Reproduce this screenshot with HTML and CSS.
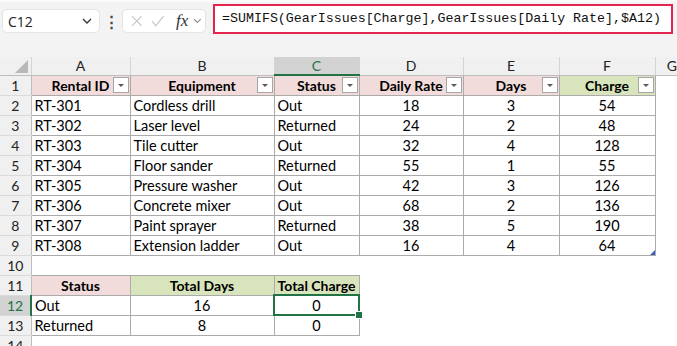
FILE: index.html
```html
<!DOCTYPE html>
<html lang="en">
<head>
  <meta charset="UTF-8" />
  <title>GearIssues</title>
  <link rel="stylesheet" href="styles.css">
</head>
<body>
  <div class="topbar">
    <div class="namebox">
      <span>C12</span>
      <svg class="chev" width="10" height="6" viewBox="0 0 10 6"><path d="M1 1l4 4 4-4" fill="none" stroke="#333" stroke-width="1.3"/></svg>
    </div>
    <div class="dots">&#8942;</div>
    <div class="fxbox">
      <svg width="12" height="12" viewBox="0 0 12 12"><path d="M1 1l10 10M11 1L1 11" stroke="#c4c4c4" stroke-width="1.2" fill="none"/></svg>
      <svg width="14" height="12" viewBox="0 0 14 12"><path d="M1 6l4 5 8-10" stroke="#c4c4c4" stroke-width="1.2" fill="none"/></svg>
      <span class="fx">fx</span>
      <svg width="9" height="6" viewBox="0 0 9 6"><path d="M1 1l3.5 3.5L8 1" fill="none" stroke="#888" stroke-width="1.1"/></svg>
    </div>
    <div class="formula">=SUMIFS(GearIssues[Charge],GearIssues[Daily Rate],$A12)</div>
  </div>

  <table class="sheet">
    <colgroup>
      <col class="w-rh"><col class="w-a"><col class="w-b"><col class="w-c"><col class="w-d"><col class="w-e"><col class="w-f"><col class="w-g">
    </colgroup>
    <thead>
      <tr class="colhead">
        <th class="corner"><span class="tri"></span></th>
        <th>A</th><th>B</th><th class="sel">C</th><th>D</th><th>E</th><th>F</th><th class="g">G</th>
      </tr>
    </thead>
    <tbody id="rows">
      <tr>
        <th class="rh">1</th>
        <td class="hd pink">Rental ID<span class="filter"></span></td>
        <td class="hd pink">Equipment<span class="filter"></span></td>
        <td class="hd pink">Status<span class="filter"></span></td>
        <td class="hd pink">Daily Rate<span class="filter"></span></td>
        <td class="hd pink">Days<span class="filter"></span></td>
        <td class="hd green">Charge<span class="filter"></span></td>
        <td class="empty"></td>
      </tr>
    </tbody>
    <tbody>
      <tr>
        <th class="rh">10</th>
        <td class="empty"></td><td class="empty"></td><td class="empty"></td><td class="empty"></td><td class="empty"></td><td class="empty"></td><td class="empty"></td>
      </tr>
      <tr>
        <th class="rh">11</th>
        <td class="hd pink">Status</td>
        <td class="hd green">Total Days</td>
        <td class="hd green tight">Total Charge</td>
        <td class="empty"></td><td class="empty"></td><td class="empty"></td><td class="empty"></td>
      </tr>
      <tr>
        <th class="rh selrow">12</th>
        <td class="cell">Out</td>
        <td class="cell num">16</td>
        <td class="cell num active">0<span class="handle"></span></td>
        <td class="empty"></td><td class="empty"></td><td class="empty"></td><td class="empty"></td>
      </tr>
      <tr>
        <th class="rh">13</th>
        <td class="cell">Returned</td>
        <td class="cell num">8</td>
        <td class="cell num">0</td>
        <td class="empty"></td><td class="empty"></td><td class="empty"></td><td class="empty"></td>
      </tr>
      <tr>
        <th class="rh">14</th>
        <td class="empty"></td><td class="empty"></td><td class="empty"></td><td class="empty"></td><td class="empty"></td><td class="empty"></td><td class="empty"></td>
      </tr>
    </tbody>
  </table>

  <script>
  // rental rows of the GearIssues table
  const gear = [
    ["RT-301", "Cordless drill", "Out", 18, 3],
    ["RT-302", "Laser level", "Returned", 24, 2],
    ["RT-303", "Tile cutter", "Out", 32, 4],
    ["RT-304", "Floor sander", "Returned", 55, 1],
    ["RT-305", "Pressure washer", "Out", 42, 3],
    ["RT-306", "Concrete mixer", "Out", 68, 2],
    ["RT-307", "Paint sprayer", "Returned", 38, 5],
    ["RT-308", "Extension ladder", "Out", 16, 4]
  ];

  const body = document.getElementById("rows");
  gear.forEach((g, i) => {
    const tr = document.createElement("tr");
    const last = i === gear.length - 1;
    tr.innerHTML =
      `<th class="rh">${i + 2}</th>` +
      `<td class="cell">${g[0]}</td>` +
      `<td class="cell">${g[1]}</td>` +
      `<td class="cell">${g[2]}</td>` +
      `<td class="cell num">${g[3]}</td>` +
      `<td class="cell num">${g[4]}</td>` +
      `<td class="cell num">${g[3] * g[4]}${last ? '<span class="corner-mark"></span>' : ''}</td>` +
      `<td class="empty"></td>`;
    body.appendChild(tr);
  });
  </script>
</body>
</html>
```

FILE: styles.css
```css
* {
  box-sizing: border-box;
}

body {
  margin: 0;
  width: 677px;
  height: 346px;
  overflow: hidden;
  background: white;
  font-family: Lato, "Liberation Sans", sans-serif;
  color: #000;
}

.topbar {
  height: 57px;
  background: #f3f3f3;
  border-top: 2px solid #fafafa;
  display: flex;
  align-items: flex-start;
  padding: 2px 0 0 2px;
}

.namebox {
  margin-top: 5px;
  width: 98px;
  height: 24px;
  background: white;
  border-radius: 5px;
  border: 1px solid #e4e4e4;
  display: flex;
  align-items: center;
  justify-content: space-between;
  padding: 0 7px 0 5px;
  font-family: "Open Sans", sans-serif;
  font-size: 14px;
  color: #222;
}

.dots {
  width: 22px;
  margin-top: 8px;
  text-align: center;
  font-size: 15px;
  font-weight: bold;
  color: #444;
}

.fxbox {
  margin-top: 5px;
  width: 84px;
  height: 24px;
  background: white;
  border-radius: 5px;
  border: 1px solid #e4e4e4;
  display: flex;
  align-items: center;
  gap: 8px;
  padding: 0 3px 0 8px;
}

.fx {
  font-family: "Liberation Serif", serif;
  font-style: italic;
  font-size: 17px;
  color: #333;
  margin-left: 4px;
  margin-right: -3px;
}

.formula {
  margin-left: 7px;
  width: 460px;
  height: 30px;
  background: white;
  border: 2px solid #e3244f;
  font-family: "Liberation Mono", monospace;
  font-size: 13.3px;
  line-height: 26px;
  padding-left: 7px;
  white-space: nowrap;
  color: #111;
}

.sheet {
  border-collapse: collapse;
  table-layout: fixed;
  width: 677px;
  font-size: 14.5px;
}

.w-rh { width: 31px; }
.w-a { width: 99px; }
.w-b { width: 144px; }
.w-c { width: 85px; }
.w-d { width: 104px; }
.w-e { width: 96px; }
.w-f { width: 96px; }
.w-g { width: 22px; }

tr {
  height: 20px;
}

tr.colhead {
  height: 18px;
}

.colhead th {
  height: 18px;
  padding: 0;
  background: #f0f0f0;
  border-right: 1px solid #d4d4d4;
  border-bottom: 1px solid #bdbdbd;
  font-weight: normal;
  font-size: 14px;
  color: #222;
  text-align: center;
}

.colhead th.sel {
  background: #d2d2d2;
  color: #217346;
  border-bottom: 2px solid #217346;
}

.colhead th.g {
  text-align: right;
  border-right: none;
  overflow: hidden;
}

.corner {
  position: relative;
}

.tri {
  position: absolute;
  right: 3px;
  bottom: 2px;
  width: 0;
  height: 0;
  border-left: 13px solid transparent;
  border-bottom: 13px solid #b8b8b8;
}

.rh {
  padding: 0;
  background: #f0f0f0;
  border-right: 1px solid #bdbdbd;
  border-bottom: 1px solid #dadada;
  font-weight: normal;
  font-size: 14px;
  color: #222;
  text-align: center;
}

.rh.selrow {
  background: #d2d2d2;
  color: #217346;
  border-right: 2px solid #217346;
}

.cell,
.hd {
  border: 1px solid #ababab;
  padding: 0 3px;
  white-space: nowrap;
  overflow: hidden;
  position: relative;
}

.num {
  text-align: center;
}

.hd {
  font-weight: bold;
  font-size: 14px;
  text-align: center;
}

.hd.tight {
  padding: 0;
  overflow: visible;
}

.pink {
  background: #f2dcdb;
}

.green {
  background: #d8e4bc;
}

.empty {
  padding: 0;
}

.filter {
  position: absolute;
  right: 1px;
  top: 1px;
  width: 16px;
  height: 16px;
  background: white;
  border: 1px solid #a6a6a6;
}

.filter::after {
  content: "";
  position: absolute;
  left: 4px;
  top: 6px;
  border-left: 3px solid transparent;
  border-right: 3px solid transparent;
  border-top: 3px solid #5a5a5a;
}

.active {
  outline: 2px solid #217346;
  outline-offset: -1px;
  overflow: visible;
}

.handle {
  position: absolute;
  right: -4px;
  bottom: -4px;
  width: 6px;
  height: 6px;
  background: #217346;
  border: 1px solid white;
  box-sizing: content-box;
}

.corner-mark {
  position: absolute;
  right: 0;
  bottom: 0;
  width: 0;
  height: 0;
  border-left: 5px solid transparent;
  border-bottom: 5px solid #4060c0;
}
```
